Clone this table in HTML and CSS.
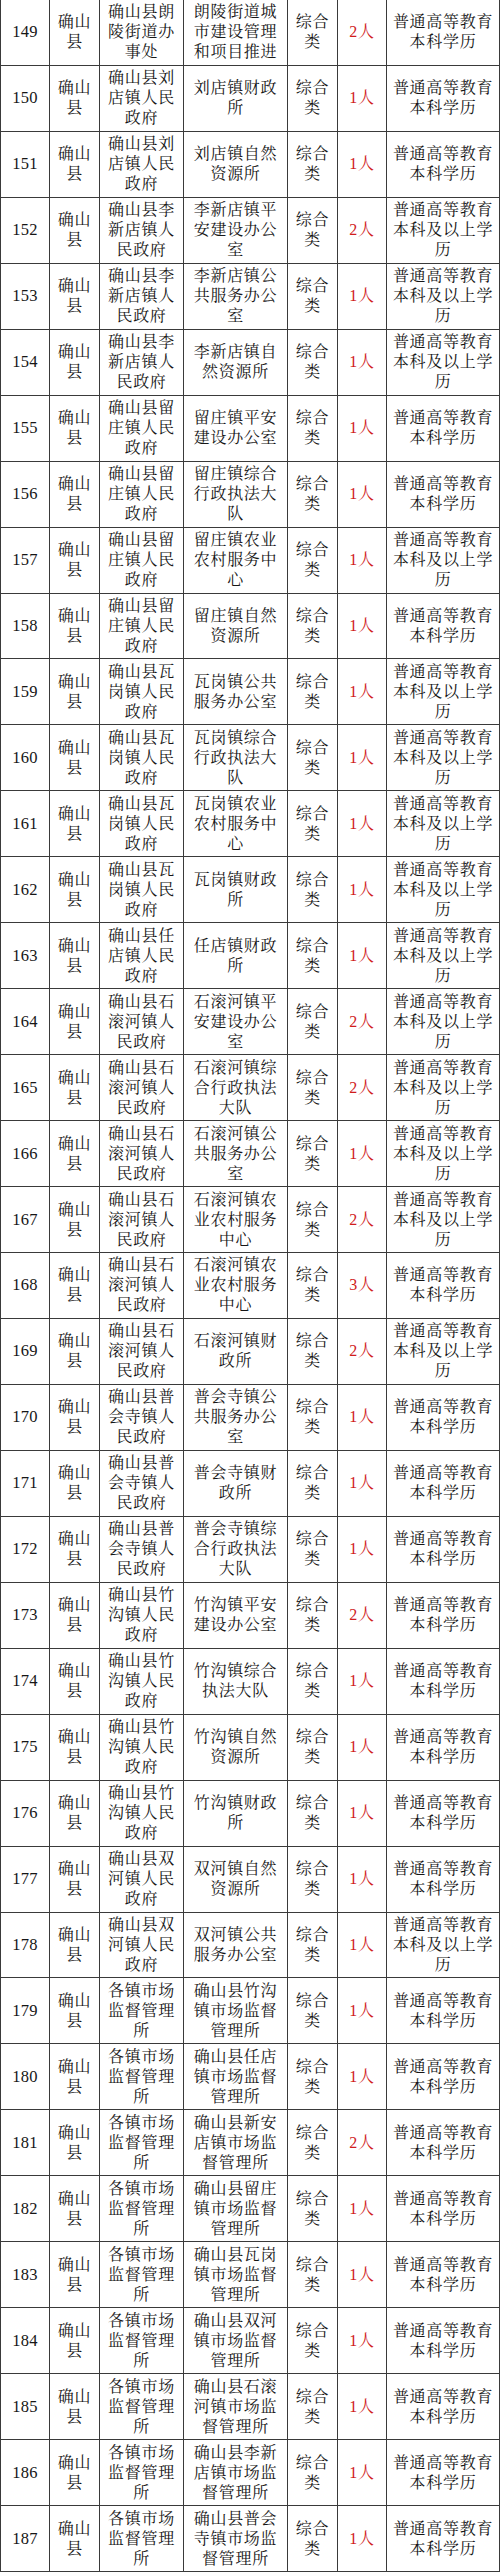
FILE: index.html
```html
<!DOCTYPE html>
<html lang="zh-CN">
<head>
<meta charset="utf-8">
<title>确山县招聘岗位表</title>
<link rel="stylesheet" href="styles.css">
</head>
<body>
<div class="sheet">
<div class="row"><div class="c no">149</div><div class="c ct">确山县</div><div class="c dp">确山县朗陵街道办事处</div><div class="c ps">朗陵街道城市建设管理和项目推进</div><div class="c ty">综合类</div><div class="c nm">2人</div><div class="c ed">普通高等教育本科学历</div></div>
<div class="row"><div class="c no">150</div><div class="c ct">确山县</div><div class="c dp">确山县刘店镇人民政府</div><div class="c ps">刘店镇财政所</div><div class="c ty">综合类</div><div class="c nm">1人</div><div class="c ed">普通高等教育本科学历</div></div>
<div class="row"><div class="c no">151</div><div class="c ct">确山县</div><div class="c dp">确山县刘店镇人民政府</div><div class="c ps">刘店镇自然资源所</div><div class="c ty">综合类</div><div class="c nm">1人</div><div class="c ed">普通高等教育本科学历</div></div>
<div class="row"><div class="c no">152</div><div class="c ct">确山县</div><div class="c dp">确山县李新店镇人民政府</div><div class="c ps">李新店镇平安建设办公室</div><div class="c ty">综合类</div><div class="c nm">2人</div><div class="c ed">普通高等教育本科及以上学历</div></div>
<div class="row"><div class="c no">153</div><div class="c ct">确山县</div><div class="c dp">确山县李新店镇人民政府</div><div class="c ps">李新店镇公共服务办公室</div><div class="c ty">综合类</div><div class="c nm">1人</div><div class="c ed">普通高等教育本科及以上学历</div></div>
<div class="row"><div class="c no">154</div><div class="c ct">确山县</div><div class="c dp">确山县李新店镇人民政府</div><div class="c ps">李新店镇自然资源所</div><div class="c ty">综合类</div><div class="c nm">1人</div><div class="c ed">普通高等教育本科及以上学历</div></div>
<div class="row"><div class="c no">155</div><div class="c ct">确山县</div><div class="c dp">确山县留庄镇人民政府</div><div class="c ps">留庄镇平安建设办公室</div><div class="c ty">综合类</div><div class="c nm">1人</div><div class="c ed">普通高等教育本科学历</div></div>
<div class="row"><div class="c no">156</div><div class="c ct">确山县</div><div class="c dp">确山县留庄镇人民政府</div><div class="c ps">留庄镇综合行政执法大队</div><div class="c ty">综合类</div><div class="c nm">1人</div><div class="c ed">普通高等教育本科学历</div></div>
<div class="row"><div class="c no">157</div><div class="c ct">确山县</div><div class="c dp">确山县留庄镇人民政府</div><div class="c ps">留庄镇农业农村服务中心</div><div class="c ty">综合类</div><div class="c nm">1人</div><div class="c ed">普通高等教育本科及以上学历</div></div>
<div class="row"><div class="c no">158</div><div class="c ct">确山县</div><div class="c dp">确山县留庄镇人民政府</div><div class="c ps">留庄镇自然资源所</div><div class="c ty">综合类</div><div class="c nm">1人</div><div class="c ed">普通高等教育本科学历</div></div>
<div class="row"><div class="c no">159</div><div class="c ct">确山县</div><div class="c dp">确山县瓦岗镇人民政府</div><div class="c ps">瓦岗镇公共服务办公室</div><div class="c ty">综合类</div><div class="c nm">1人</div><div class="c ed">普通高等教育本科及以上学历</div></div>
<div class="row"><div class="c no">160</div><div class="c ct">确山县</div><div class="c dp">确山县瓦岗镇人民政府</div><div class="c ps">瓦岗镇综合行政执法大队</div><div class="c ty">综合类</div><div class="c nm">1人</div><div class="c ed">普通高等教育本科及以上学历</div></div>
<div class="row"><div class="c no">161</div><div class="c ct">确山县</div><div class="c dp">确山县瓦岗镇人民政府</div><div class="c ps">瓦岗镇农业农村服务中心</div><div class="c ty">综合类</div><div class="c nm">1人</div><div class="c ed">普通高等教育本科及以上学历</div></div>
<div class="row"><div class="c no">162</div><div class="c ct">确山县</div><div class="c dp">确山县瓦岗镇人民政府</div><div class="c ps">瓦岗镇财政所</div><div class="c ty">综合类</div><div class="c nm">1人</div><div class="c ed">普通高等教育本科及以上学历</div></div>
<div class="row"><div class="c no">163</div><div class="c ct">确山县</div><div class="c dp">确山县任店镇人民政府</div><div class="c ps">任店镇财政所</div><div class="c ty">综合类</div><div class="c nm">1人</div><div class="c ed">普通高等教育本科及以上学历</div></div>
<div class="row"><div class="c no">164</div><div class="c ct">确山县</div><div class="c dp">确山县石滚河镇人民政府</div><div class="c ps">石滚河镇平安建设办公室</div><div class="c ty">综合类</div><div class="c nm">2人</div><div class="c ed">普通高等教育本科及以上学历</div></div>
<div class="row"><div class="c no">165</div><div class="c ct">确山县</div><div class="c dp">确山县石滚河镇人民政府</div><div class="c ps">石滚河镇综合行政执法大队</div><div class="c ty">综合类</div><div class="c nm">2人</div><div class="c ed">普通高等教育本科及以上学历</div></div>
<div class="row"><div class="c no">166</div><div class="c ct">确山县</div><div class="c dp">确山县石滚河镇人民政府</div><div class="c ps">石滚河镇公共服务办公室</div><div class="c ty">综合类</div><div class="c nm">1人</div><div class="c ed">普通高等教育本科及以上学历</div></div>
<div class="row"><div class="c no">167</div><div class="c ct">确山县</div><div class="c dp">确山县石滚河镇人民政府</div><div class="c ps">石滚河镇农业农村服务中心</div><div class="c ty">综合类</div><div class="c nm">2人</div><div class="c ed">普通高等教育本科及以上学历</div></div>
<div class="row"><div class="c no">168</div><div class="c ct">确山县</div><div class="c dp">确山县石滚河镇人民政府</div><div class="c ps">石滚河镇农业农村服务中心</div><div class="c ty">综合类</div><div class="c nm">3人</div><div class="c ed">普通高等教育本科学历</div></div>
<div class="row"><div class="c no">169</div><div class="c ct">确山县</div><div class="c dp">确山县石滚河镇人民政府</div><div class="c ps">石滚河镇财政所</div><div class="c ty">综合类</div><div class="c nm">2人</div><div class="c ed">普通高等教育本科及以上学历</div></div>
<div class="row"><div class="c no">170</div><div class="c ct">确山县</div><div class="c dp">确山县普会寺镇人民政府</div><div class="c ps">普会寺镇公共服务办公室</div><div class="c ty">综合类</div><div class="c nm">1人</div><div class="c ed">普通高等教育本科学历</div></div>
<div class="row"><div class="c no">171</div><div class="c ct">确山县</div><div class="c dp">确山县普会寺镇人民政府</div><div class="c ps">普会寺镇财政所</div><div class="c ty">综合类</div><div class="c nm">1人</div><div class="c ed">普通高等教育本科学历</div></div>
<div class="row"><div class="c no">172</div><div class="c ct">确山县</div><div class="c dp">确山县普会寺镇人民政府</div><div class="c ps">普会寺镇综合行政执法大队</div><div class="c ty">综合类</div><div class="c nm">1人</div><div class="c ed">普通高等教育本科学历</div></div>
<div class="row"><div class="c no">173</div><div class="c ct">确山县</div><div class="c dp">确山县竹沟镇人民政府</div><div class="c ps">竹沟镇平安建设办公室</div><div class="c ty">综合类</div><div class="c nm">2人</div><div class="c ed">普通高等教育本科学历</div></div>
<div class="row"><div class="c no">174</div><div class="c ct">确山县</div><div class="c dp">确山县竹沟镇人民政府</div><div class="c ps">竹沟镇综合执法大队</div><div class="c ty">综合类</div><div class="c nm">1人</div><div class="c ed">普通高等教育本科学历</div></div>
<div class="row"><div class="c no">175</div><div class="c ct">确山县</div><div class="c dp">确山县竹沟镇人民政府</div><div class="c ps">竹沟镇自然资源所</div><div class="c ty">综合类</div><div class="c nm">1人</div><div class="c ed">普通高等教育本科学历</div></div>
<div class="row"><div class="c no">176</div><div class="c ct">确山县</div><div class="c dp">确山县竹沟镇人民政府</div><div class="c ps">竹沟镇财政所</div><div class="c ty">综合类</div><div class="c nm">1人</div><div class="c ed">普通高等教育本科学历</div></div>
<div class="row"><div class="c no">177</div><div class="c ct">确山县</div><div class="c dp">确山县双河镇人民政府</div><div class="c ps">双河镇自然资源所</div><div class="c ty">综合类</div><div class="c nm">1人</div><div class="c ed">普通高等教育本科学历</div></div>
<div class="row"><div class="c no">178</div><div class="c ct">确山县</div><div class="c dp">确山县双河镇人民政府</div><div class="c ps">双河镇公共服务办公室</div><div class="c ty">综合类</div><div class="c nm">1人</div><div class="c ed">普通高等教育本科及以上学历</div></div>
<div class="row"><div class="c no">179</div><div class="c ct">确山县</div><div class="c dp">各镇市场监督管理所</div><div class="c ps">确山县竹沟镇市场监督管理所</div><div class="c ty">综合类</div><div class="c nm">1人</div><div class="c ed">普通高等教育本科学历</div></div>
<div class="row"><div class="c no">180</div><div class="c ct">确山县</div><div class="c dp">各镇市场监督管理所</div><div class="c ps">确山县任店镇市场监督管理所</div><div class="c ty">综合类</div><div class="c nm">1人</div><div class="c ed">普通高等教育本科学历</div></div>
<div class="row"><div class="c no">181</div><div class="c ct">确山县</div><div class="c dp">各镇市场监督管理所</div><div class="c ps">确山县新安店镇市场监督管理所</div><div class="c ty">综合类</div><div class="c nm">2人</div><div class="c ed">普通高等教育本科学历</div></div>
<div class="row"><div class="c no">182</div><div class="c ct">确山县</div><div class="c dp">各镇市场监督管理所</div><div class="c ps">确山县留庄镇市场监督管理所</div><div class="c ty">综合类</div><div class="c nm">1人</div><div class="c ed">普通高等教育本科学历</div></div>
<div class="row"><div class="c no">183</div><div class="c ct">确山县</div><div class="c dp">各镇市场监督管理所</div><div class="c ps">确山县瓦岗镇市场监督管理所</div><div class="c ty">综合类</div><div class="c nm">1人</div><div class="c ed">普通高等教育本科学历</div></div>
<div class="row"><div class="c no">184</div><div class="c ct">确山县</div><div class="c dp">各镇市场监督管理所</div><div class="c ps">确山县双河镇市场监督管理所</div><div class="c ty">综合类</div><div class="c nm">1人</div><div class="c ed">普通高等教育本科学历</div></div>
<div class="row"><div class="c no">185</div><div class="c ct">确山县</div><div class="c dp">各镇市场监督管理所</div><div class="c ps">确山县石滚河镇市场监督管理所</div><div class="c ty">综合类</div><div class="c nm">1人</div><div class="c ed">普通高等教育本科学历</div></div>
<div class="row"><div class="c no">186</div><div class="c ct">确山县</div><div class="c dp">各镇市场监督管理所</div><div class="c ps">确山县李新店镇市场监督管理所</div><div class="c ty">综合类</div><div class="c nm">1人</div><div class="c ed">普通高等教育本科学历</div></div>
<div class="row"><div class="c no">187</div><div class="c ct">确山县</div><div class="c dp">各镇市场监督管理所</div><div class="c ps">确山县普会寺镇市场监督管理所</div><div class="c ty">综合类</div><div class="c nm">1人</div><div class="c ed">普通高等教育本科学历</div></div>
</div>
</body>
</html>
```

FILE: styles.css
```css
html, body {
  margin: 0;
  padding: 0;
  background: #ffffff;
}

.sheet {
  width: 500px;
  height: 2572px;
  display: grid;
  grid-template-rows: repeat(39, 1fr);
  font-family: "Liberation Serif", "Noto Serif CJK SC", "Noto Sans CJK SC", serif;
  font-size: 16px;
  line-height: 20px;
  color: #161616;
  box-sizing: border-box;
  border-left: 1px solid #3a3a3a;
}

.row {
  display: grid;
  grid-template-columns: 49px 50px 84px 104px 50px 49px 113px;
  min-height: 0;
}

.c {
  display: flex;
  align-items: center;
  justify-content: center;
  text-align: center;
  border-right: 1px solid #3a3a3a;
  border-bottom: 1px solid #3a3a3a;
  letter-spacing: 0.7px;
  padding: 0 6px;
  min-width: 0;
  overflow: hidden;
}

.no {
  padding: 0;
  font-size: 16.5px;
  letter-spacing: 0.3px;
}

.ct, .ty {
  padding: 0 3px;
}

.nm {
  padding: 0;
  color: #d01c1c;
}

.ed {
  padding: 0 4px;
}
```
